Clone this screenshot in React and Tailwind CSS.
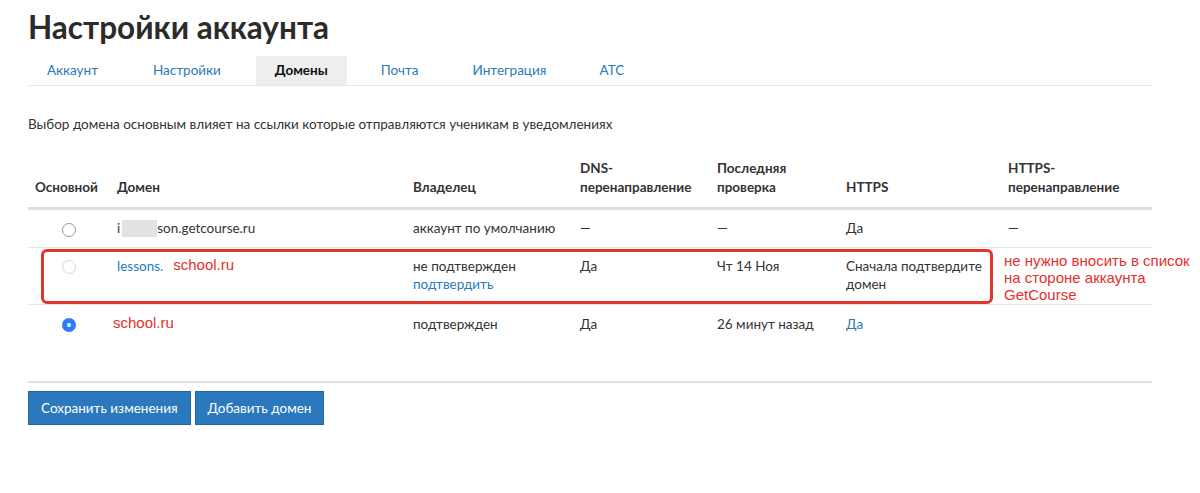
import React from "react";

const F = { fontFamily: "Lato, 'Open Sans', sans-serif" };

function Radio({ checked, faint }) {
  if (checked)
    return (
      <span className="inline-flex h-[14px] w-[14px] items-center justify-center rounded-full bg-[#2f7df6]">
        <span className="h-[4px] w-[4px] rounded-full bg-white" />
      </span>
    );
  return (
    <span
      className={
        "inline-block h-[14px] w-[14px] rounded-full border bg-white " +
        (faint ? "border-[#d6d6d6]" : "border-[#9a9a9a]")
      }
    />
  );
}

const cols = "grid grid-cols-[81px_296px_167px_137px_129px_162px_152px]";

export default function App() {
  return (
    <div className="relative min-h-[493px] w-[1200px] bg-white text-[13.5px] text-[#333]" style={F}>
      <div className="px-[28px] pt-[8px]">
        <h1 className="text-[31.5px] font-bold leading-[38px] text-[#2b2b2b]">Настройки аккаунта</h1>
        <div className="mt-[10px] flex w-[1124px] border-b border-[#e8e8e8]">
          {["Аккаунт", "Настройки", "Домены", "Почта", "Интеграция", "АТС"].map((t, i) => (
            <div
              key={t}
              className={
                "flex h-[29px] items-center px-[19px] " +
                (i === 2 ? "bg-[#eeeeee] font-bold text-[#111]" : "text-[#2a7ab9]") +
                " " +
                ["mr-[17px]", "mr-[16px]", "mr-[15px]", "mr-[16px]", "mr-[15px]", ""][i]
              }
            >
              {t}
            </div>
          ))}
        </div>
        <p className="mt-[29px] leading-[18px]">
          Выбор домена основным влияет на ссылки которые отправляются ученикам в уведомлениях
        </p>

        <div className="mt-[26px] w-[1124px]">
          <div className={cols + " items-end border-b-[3px] border-[#dddddd] pb-[10px] font-bold leading-[19px] text-[#333]"}>
            <div className="pl-[7px]">Основной</div>
            <div className="pl-[8px]">Домен</div>
            <div className="pl-[8px]">Владелец</div>
            <div className="pl-[8px]">DNS-<br />перенаправление</div>
            <div className="pl-[8px]">Последняя<br />проверка</div>
            <div className="pl-[8px]">HTTPS</div>
            <div className="pl-[8px]">HTTPS-<br />перенаправление</div>
          </div>

          <div className={cols + " h-[38px] items-center border-b border-[#e6e6e6]"}>
            <div className="flex justify-center pt-[3px]"><Radio /></div>
            <div className="flex items-center pl-[8px]">
              <span>i</span>
              <span className="ml-[2px] inline-block h-[17px] w-[35px] bg-[#e2e2e2]" />
              <span>son.getcourse.ru</span>
            </div>
            <div className="pl-[8px]">аккаунт по умолчанию</div>
            <div className="pl-[8px]">—</div>
            <div className="pl-[8px]">—</div>
            <div className="pl-[8px]">Да</div>
            <div className="pl-[8px]">—</div>
          </div>

          <div className={cols + " h-[57px] items-start border-b border-[#e6e6e6] pt-[9px] leading-[18px]"}>
            <div className="flex justify-center pt-[3px]"><Radio faint /></div>
            <div className="flex items-center pl-[8px]">
              <span className="text-[#2a7ab9]">lessons.</span>
              <span
                className="-mt-[2px] bg-white pl-[10px] pr-[8px] text-[15px] text-[#e53029]"
                style={{ fontFamily: "'Liberation Sans', Arial, sans-serif" }}
              >
                school.ru
              </span>
            </div>
            <div className="pl-[8px]">
              не подтвержден
              <br />
              <span className="text-[#2a7ab9]">подтвердить</span>
            </div>
            <div className="pl-[8px]">Да</div>
            <div className="pl-[8px]">Чт 14 Ноя</div>
            <div className="pl-[8px]">Сначала подтвердите<br />домен</div>
            <div />
          </div>

          <div className={cols + " h-[38px] items-center"}>
            <div className="flex justify-center pt-[1px]"><Radio checked /></div>
            <div className="pl-[4px]">
              <span
                className="-mt-[4px] inline-block bg-white pr-[8px] text-[15px] text-[#e53029]"
                style={{ fontFamily: "'Liberation Sans', Arial, sans-serif" }}
              >
                school.ru
              </span>
            </div>
            <div className="pl-[8px]">подтвержден</div>
            <div className="pl-[8px]">Да</div>
            <div className="pl-[8px]">26 минут назад</div>
            <div className="pl-[8px] text-[#2a7ab9]">Да</div>
            <div />
          </div>
        </div>

        <div className="mt-[38px] h-[2px] w-[1124px] bg-[#e0e0e0]" />
        <div className="mt-[8px] flex gap-[4px]">
          <button className="h-[34px] border border-[#2268a0] bg-[#2a78bd] px-[12px] text-[13.5px] text-white">
            Сохранить изменения
          </button>
          <button className="h-[34px] border border-[#2268a0] bg-[#2a78bd] px-[12px] text-[13.5px] text-white">
            Добавить домен
          </button>
        </div>
      </div>

      <div className="pointer-events-none absolute left-[41px] top-[249px] h-[55px] w-[952px] rounded-[6px] border-[3px] border-[#e2352d]" />
      <div
        className="absolute left-[1004px] top-[252px] text-[15px] leading-[17px] text-[#e53029]"
        style={{ fontFamily: "'Liberation Sans', Arial, sans-serif" }}
      >
        не нужно вносить в список
        <br />
        на стороне аккаунта
        <br />
        GetCourse
      </div>
    </div>
  );
}
